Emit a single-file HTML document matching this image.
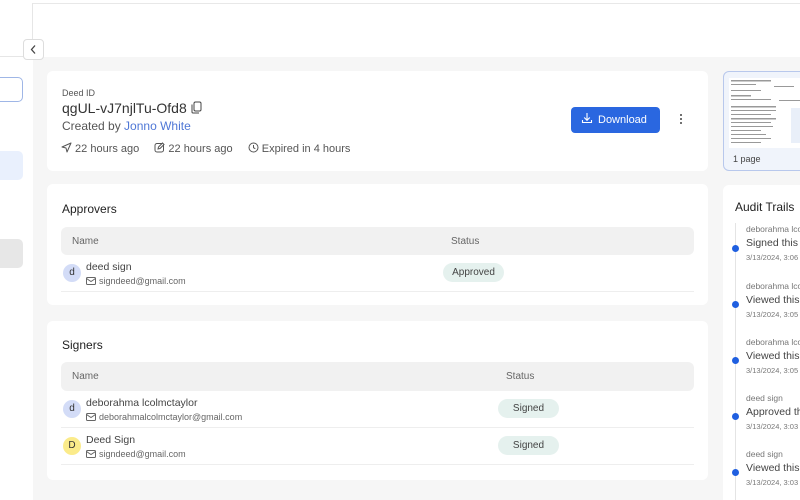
<!DOCTYPE html>
<html><head><style>
*{box-sizing:border-box;margin:0;padding:0}
html,body{width:800px;height:500px;overflow:hidden}
body{background:#f6f6f6;font-family:"Liberation Sans",sans-serif;color:#333;position:relative}
.abs{position:absolute;white-space:nowrap}
.card{position:absolute;background:#fff;border-radius:6px;overflow:hidden}
.th{position:absolute;left:14px;right:14px;height:28px;background:#f1f1f1;border-radius:6px;font-size:10px;color:#666}
.th span{position:absolute;top:9px}
.row{position:absolute;left:14px;right:14px;height:37px;border-bottom:1px solid #eee}
.av{position:absolute;left:2px;top:9px;width:18px;height:18px;border-radius:50%;font-size:10px;text-align:center;line-height:18px;color:#333}
.nm{position:absolute;left:25px;top:6px;font-size:10.5px;color:#444;white-space:nowrap}
.em{position:absolute;left:25px;top:21px;font-size:9px;color:#666;white-space:nowrap}
.em svg{vertical-align:-1px;margin-right:3px}
.pill{position:absolute;top:8px;height:19px;border-radius:10px;background:#e5f1ee;font-size:10px;color:#444;text-align:center;line-height:19px}
.au{position:absolute;left:23px;font-size:9px;white-space:nowrap}
.dot{position:absolute;left:9px;width:7px;height:7px;border-radius:50%;background:#1f5fe0}
</style></head><body>
<div class="abs" style="left:0;top:0;width:800px;height:57px;background:#fff"></div>
<div class="abs" style="left:0;top:3px;width:800px;height:1px;background:#e8e8e8"></div>
<div class="abs" style="left:0;top:0;width:33px;height:500px;background:#fff"></div>
<div class="abs" style="left:32px;top:3px;width:1px;height:54px;background:#e6e6e6"></div>
<div class="abs" style="left:0;top:56px;width:33px;height:1px;background:#e6e6e6"></div>
<div class="abs" style="left:-5px;top:77px;width:28px;height:25px;border:1px solid #9fb6e6;border-radius:5px"></div>
<div class="abs" style="left:-5px;top:151px;width:28px;height:29px;background:#e9f0fd;border-radius:5px"></div>
<div class="abs" style="left:-5px;top:239px;width:28px;height:29px;background:#e7e7e7;border-radius:5px"></div>
<div class="abs" style="left:23px;top:39px;width:21px;height:21px;background:#fff;border:1px solid #ddd;border-radius:4px"><svg width="19" height="19" viewBox="0 0 19 19"><path d="M11 5.5L7.5 9.5L11 13.5" stroke="#444" stroke-width="1.3" fill="none"/></svg></div>

<div class="card" style="left:47px;top:71px;width:661px;height:100px">
 <div class="abs" style="left:15px;top:17px;font-size:9px;color:#555">Deed ID</div>
 <div class="abs" style="left:15px;top:29px;font-size:14px;color:#333">qgUL-vJ7njlTu-Ofd8 <svg width="11" height="13" viewBox="0 0 11 13" style="vertical-align:-1px"><rect x="3" y="1" width="7" height="9" rx="1.5" stroke="#444" fill="none"/><path d="M1 3.5v7.5a1 1 0 001 1h6" stroke="#444" fill="none"/></svg></div>
 <div class="abs" style="left:15px;top:48px;font-size:12px;color:#555">Created by <span style="color:#4f77d6">Jonno White</span></div>
 <div class="abs" style="left:14px;top:71px;font-size:11px;color:#555">
 <svg width="11" height="11" viewBox="0 0 11 11" style="vertical-align:-1px"><path d="M10 1L1 5l4 1 1 4z" stroke="#555" fill="none" stroke-linejoin="round"/></svg> 22 hours ago
 <span style="margin-left:12px"><svg width="11" height="11" viewBox="0 0 11 11" style="vertical-align:-1px"><rect x="1" y="1.5" width="8.5" height="8.5" rx="2" stroke="#555" fill="none"/><path d="M4 7l.5-2 4-4 1.5 1.5-4 4z" stroke="#555" fill="#fff"/></svg> 22 hours ago</span>
 <span style="margin-left:12px"><svg width="11" height="11" viewBox="0 0 11 11" style="vertical-align:-1px"><circle cx="5.5" cy="5.5" r="4.5" stroke="#555" fill="none"/><path d="M5.5 3v2.7l1.8 1" stroke="#555" fill="none"/></svg> Expired in 4 hours</span></div>
 <div class="abs" style="left:524px;top:36px;width:89px;height:26px;background:#2a67e0;border-radius:4px;color:#fff;font-size:11px;line-height:26px;padding-left:10px"><svg width="12" height="12" viewBox="0 0 12 12" style="vertical-align:-1px;margin-right:5px"><path d="M6 1v7M3.2 5.5L6 8.3l2.8-2.8M1.5 8v2.5h9V8" stroke="#fff" stroke-width="1.1" fill="none"/></svg>Download</div>
 <div class="abs" style="left:633px;top:43px;width:2px"><div style="width:2px;height:2px;background:#444;border-radius:1px;margin-bottom:2px"></div><div style="width:2px;height:2px;background:#444;border-radius:1px;margin-bottom:2px"></div><div style="width:2px;height:2px;background:#444;border-radius:1px"></div></div>
</div>

<div class="card" style="left:47px;top:184px;width:661px;height:121px">
 <div class="abs" style="left:15px;top:18px;font-size:12px;color:#222">Approvers</div>
 <div class="th" style="top:43px"><span style="left:11px">Name</span><span style="left:390px">Status</span></div>
 <div class="row" style="top:71px">
  <div class="av" style="background:#d3dcf7">d</div><div class="nm">deed sign</div>
  <div class="em"><svg width="10" height="8" viewBox="0 0 10 8"><rect x=".5" y=".5" width="9" height="7" rx="1" stroke="#666" fill="none"/><path d="M.5 1.5l4.5 3 4.5-3" stroke="#666" fill="none"/></svg>signdeed@gmail.com</div>
  <div class="pill" style="left:382px;width:61px">Approved</div>
 </div>
</div>

<div class="card" style="left:47px;top:321px;width:661px;height:159px">
 <div class="abs" style="left:15px;top:17px;font-size:12px;color:#222">Signers</div>
 <div class="th" style="top:41px;height:29px"><span style="left:11px">Name</span><span style="left:445px">Status</span></div>
 <div class="row" style="top:70px">
  <div class="av" style="background:#d3dcf7">d</div><div class="nm">deborahma lcolmctaylor</div>
  <div class="em"><svg width="10" height="8" viewBox="0 0 10 8"><rect x=".5" y=".5" width="9" height="7" rx="1" stroke="#666" fill="none"/><path d="M.5 1.5l4.5 3 4.5-3" stroke="#666" fill="none"/></svg>deborahmalcolmctaylor@gmail.com</div>
  <div class="pill" style="left:437px;width:61px">Signed</div>
 </div>
 <div class="row" style="top:107px">
  <div class="av" style="background:#fbeb8a">D</div><div class="nm">Deed Sign</div>
  <div class="em"><svg width="10" height="8" viewBox="0 0 10 8"><rect x=".5" y=".5" width="9" height="7" rx="1" stroke="#666" fill="none"/><path d="M.5 1.5l4.5 3 4.5-3" stroke="#666" fill="none"/></svg>signdeed@gmail.com</div>
  <div class="pill" style="left:437px;width:61px">Signed</div>
 </div>
</div>

<div class="card" style="left:723px;top:71px;width:90px;height:100px;border:1px solid #b8c8ec;background:#f0f4fb">
 <div class="abs" style="left:5px;top:6px;width:85px;height:70px;background:#fff;overflow:hidden">
  <svg width="85" height="70"><g fill="#999"><rect x="2" y="2" width="40" height="1.5"/><rect x="2" y="6" width="25" height="1"/><rect x="45" y="8" width="20" height="1"/><rect x="2" y="12" width="30" height="1"/><rect x="2" y="17" width="20" height="1.5"/><rect x="2" y="21" width="40" height="1"/><rect x="50" y="22" width="25" height="1"/><rect x="2" y="28" width="45" height="1.5"/><rect x="2" y="32" width="45" height="1"/><rect x="2" y="36" width="40" height="1"/><rect x="2" y="40" width="45" height="1.5"/><rect x="2" y="44" width="40" height="1"/><rect x="2" y="48" width="42" height="1"/><rect x="2" y="52" width="30" height="1"/><rect x="2" y="56" width="35" height="1"/><rect x="2" y="60" width="40" height="1"/><rect x="2" y="64" width="30" height="1"/></g><rect x="62" y="30" width="23" height="35" fill="#e4ebf8" opacity=".8"/></svg>
 </div>
 <div class="abs" style="left:9px;top:82px;font-size:9px;color:#444">1 page</div>
</div>

<div class="card" style="left:723px;top:185px;width:90px;height:315px;border-radius:6px 0 0 0">
 <div class="abs" style="left:12px;top:15px;font-size:12px;color:#222">Audit Trails</div>
 <div class="abs" style="left:12px;top:38px;width:1px;height:290px;background:#e4e4e4"></div>
 <div class="dot" style="top:60px"></div>
 <div class="au" style="top:39px;color:#777;font-size:8.5px">deborahma lcolmctaylor</div>
 <div class="au" style="top:52px;font-size:10.5px;color:#444">Signed this document</div>
 <div class="au" style="top:68px;color:#777;font-size:7.5px">3/13/2024, 3:06 PM</div>
 <div class="dot" style="top:116px"></div>
 <div class="au" style="top:96px;color:#777;font-size:8.5px">deborahma lcolmctaylor</div>
 <div class="au" style="top:109px;font-size:10.5px;color:#444">Viewed this document</div>
 <div class="au" style="top:125px;color:#777;font-size:7.5px">3/13/2024, 3:05 PM</div>
 <div class="dot" style="top:172px"></div>
 <div class="au" style="top:152px;color:#777;font-size:8.5px">deborahma lcolmctaylor</div>
 <div class="au" style="top:165px;font-size:10.5px;color:#444">Viewed this document</div>
 <div class="au" style="top:181px;color:#777;font-size:7.5px">3/13/2024, 3:05 PM</div>
 <div class="dot" style="top:228px"></div>
 <div class="au" style="top:208px;color:#777;font-size:8.5px">deed sign</div>
 <div class="au" style="top:221px;font-size:10.5px;color:#444">Approved this document</div>
 <div class="au" style="top:237px;color:#777;font-size:7.5px">3/13/2024, 3:03 PM</div>
 <div class="dot" style="top:284px"></div>
 <div class="au" style="top:264px;color:#777;font-size:8.5px">deed sign</div>
 <div class="au" style="top:277px;font-size:10.5px;color:#444">Viewed this document</div>
 <div class="au" style="top:293px;color:#777;font-size:7.5px">3/13/2024, 3:03 PM</div>
</div>
</body></html>
